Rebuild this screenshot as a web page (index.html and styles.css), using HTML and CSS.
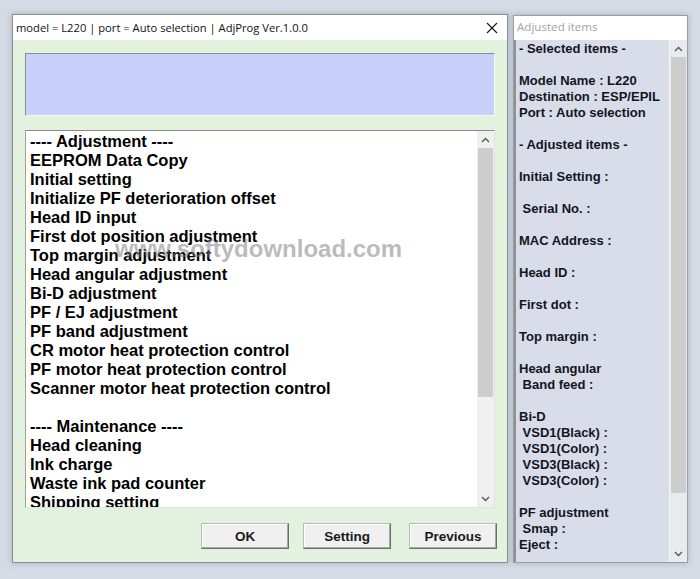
FILE: index.html
```html
<!DOCTYPE html>
<html lang="en">
<head>
  <title>AdjProg</title>
  <link rel="stylesheet" href="styles.css">
</head>
<body>
  <div class="desktop">
    <div class="window">
      <div class="titlebar">
        <span class="title">model = L220 | port = Auto selection | AdjProg Ver.1.0.0</span>
        <svg class="close" width="12" height="12" viewBox="0 0 12 12">
          <path d="M1 1 L11 11 M11 1 L1 11" stroke="#111" stroke-width="1.1" fill="none"/>
        </svg>
      </div>
      <div class="client">
        <div class="status-box"></div>
        <div class="listbox">
          <div class="list-text">
            <div>---- Adjustment ----</div>
            <div>EEPROM Data Copy</div>
            <div>Initial setting</div>
            <div>Initialize PF deterioration offset</div>
            <div>Head ID input</div>
            <div>First dot position adjustment</div>
            <div>Top margin adjustment</div>
            <div>Head angular adjustment</div>
            <div>Bi-D adjustment</div>
            <div>PF / EJ adjustment</div>
            <div>PF band adjustment</div>
            <div>CR motor heat protection control</div>
            <div>PF motor heat protection control</div>
            <div>Scanner motor heat protection control</div>
            <div>&nbsp;</div>
            <div>---- Maintenance ----</div>
            <div>Head cleaning</div>
            <div>Ink charge</div>
            <div>Waste ink pad counter</div>
            <div>Shipping setting</div>
          </div>
          <div class="scrollbar">
            <div class="arrow"><svg width="9" height="6" viewBox="0 0 9 6"><path d="M1 5 L4.5 1.5 L8 5" stroke="#555" stroke-width="1.3" fill="none"/></svg></div>
            <div class="thumb list-thumb"></div>
            <div class="track"></div>
            <div class="arrow"><svg width="9" height="6" viewBox="0 0 9 6"><path d="M1 1 L4.5 4.5 L8 1" stroke="#555" stroke-width="1.3" fill="none"/></svg></div>
          </div>
          <div class="watermark">www.softydownload.com</div>
        </div>
        <div class="buttons">
          <button class="btn">OK</button>
          <button class="btn btn-mid">Setting</button>
          <button class="btn btn-last">Previous</button>
        </div>
      </div>
    </div>

    <div class="panel">
      <div class="panel-title">Adjusted items</div>
      <div class="panel-body">
        <div class="panel-text">- Selected items -

Model Name : L220
Destination : ESP/EPIL
Port : Auto selection

- Adjusted items -

Initial Setting :

 Serial No. :

MAC Address :

Head ID :

First dot :

Top margin :

Head angular
 Band feed :

Bi-D
 VSD1(Black) :
 VSD1(Color) :
 VSD3(Black) :
 VSD3(Color) :

PF adjustment
 Smap :
Eject :</div>
        <div class="scrollbar panel-scroll">
          <div class="arrow"><svg width="9" height="6" viewBox="0 0 9 6"><path d="M1 5 L4.5 1.5 L8 5" stroke="#555" stroke-width="1.3" fill="none"/></svg></div>
          <div class="thumb panel-thumb"></div>
          <div class="track"></div>
          <div class="arrow"><svg width="9" height="6" viewBox="0 0 9 6"><path d="M1 1 L4.5 4.5 L8 1" stroke="#555" stroke-width="1.3" fill="none"/></svg></div>
        </div>
      </div>
    </div>
  </div>
</body>
</html>
```

FILE: styles.css
```css
*{
  margin: 0;
  padding: 0;
  box-sizing: border-box;
}
body{
  width: 700px;
  height: 579px;
  overflow: hidden;
  background: #d5dbe5;
  font-family: "Liberation Sans", Arial, sans-serif;
}
.desktop{
  display: flex;
  align-items: flex-start;
  padding: 14px 0 0 12px;
  gap: 5px;
}
.window{
  width: 496px;
  height: 549px;
  border: 1px solid #8a8d92;
  background: #e3f1df;
  box-shadow: 0 0 6px rgba(80, 90, 110, 0.35);
  display: flex;
  flex-direction: column;
}
.titlebar{
  height: 25px;
  background: #fff;
  display: flex;
  align-items: center;
  justify-content: space-between;
  padding: 0 9px 0 3px;
  flex-shrink: 0;
}
.title{
  font-family: "Open Sans", "Noto Sans", sans-serif;
  font-size: 11.2px;
  color: #111;
}
.client{
  flex: 1;
  padding: 13px 12px 0 12px;
  display: flex;
  flex-direction: column;
}
.status-box{
  height: 63px;
  background: #c7d1f9;
  border: 1px solid;
  border-color: #8c8c8c #f4f8f2 #f4f8f2 #8c8c8c;
}
.listbox{
  position: relative;
  margin-top: 14px;
  height: 378px;
  background: #fff;
  border: 1px solid;
  border-color: #8a8a8a #dde6d9 #dde6d9 #a0a0a0;
  display: flex;
  overflow: hidden;
}
.list-text{
  flex: 1;
  padding: 1px 0 0 4px;
  font-size: 16.5px;
  font-weight: bold;
  line-height: 19px;
  color: #000;
  overflow: hidden;
  white-space: nowrap;
}
.scrollbar{
  width: 17px;
  display: flex;
  flex-direction: column;
  background: #f0f0f0;
  flex-shrink: 0;
}
.arrow{
  height: 17px;
  display: flex;
  align-items: center;
  justify-content: center;
  flex-shrink: 0;
}
.thumb{
  background: #cdcdcd;
  margin: 0 1px;
  flex-shrink: 0;
}
.list-thumb{
  height: 249px;
}
.track{
  flex: 1;
}
.watermark{
  position: absolute;
  left: 89px;
  top: 104px;
  font-size: 24px;
  font-weight: bold;
  color: rgba(120, 120, 120, 0.5);
  white-space: nowrap;
  pointer-events: none;
}
.buttons{
  display: flex;
  justify-content: flex-end;
  margin: 15px -2px 0 0;
}
.btn{
  width: 88px;
  height: 26px;
  font-family: "Liberation Sans", Arial, sans-serif;
  font-size: 13.5px;
  font-weight: bold;
  color: #1a1a1a;
  background: #f0f0f0;
  border: 1px solid;
  border-color: #b9b9b9 #6e6e6e #6e6e6e #b9b9b9;
  box-shadow: inset -1px -1px 0 #a8a8a8, inset 1px 1px 0 #fff;
}
.btn-mid{
  margin-left: 14px;
}
.btn-last{
  margin-left: 18px;
}
.panel{
  width: 175px;
  height: 548px;
  margin-top: 1px;
  border: 1px solid #9a9ea6;
  background: #d9dde9;
  box-shadow: 0 0 6px rgba(80, 90, 110, 0.35);
  display: flex;
  flex-direction: column;
}
.panel-title{
  height: 24px;
  background: #fff;
  font-family: "Open Sans", "Noto Sans", sans-serif;
  font-size: 11.6px;
  color: #a3a3a3;
  padding: 3px 0 0 3px;
  flex-shrink: 0;
}
.panel-body{
  flex: 1;
  display: flex;
  border-left: 2px solid #8e9298;
  overflow: hidden;
}
.panel-text{
  flex: 1;
  padding: 1px 0 0 3px;
  font-size: 13px;
  font-weight: bold;
  line-height: 16px;
  color: #141420;
  white-space: pre;
  overflow: hidden;
  border-right: 1px solid #f4f5f8;
}
.panel-scroll{
  background: #e9eaee;
}
.panel-thumb{
  height: 436px;
}
```
